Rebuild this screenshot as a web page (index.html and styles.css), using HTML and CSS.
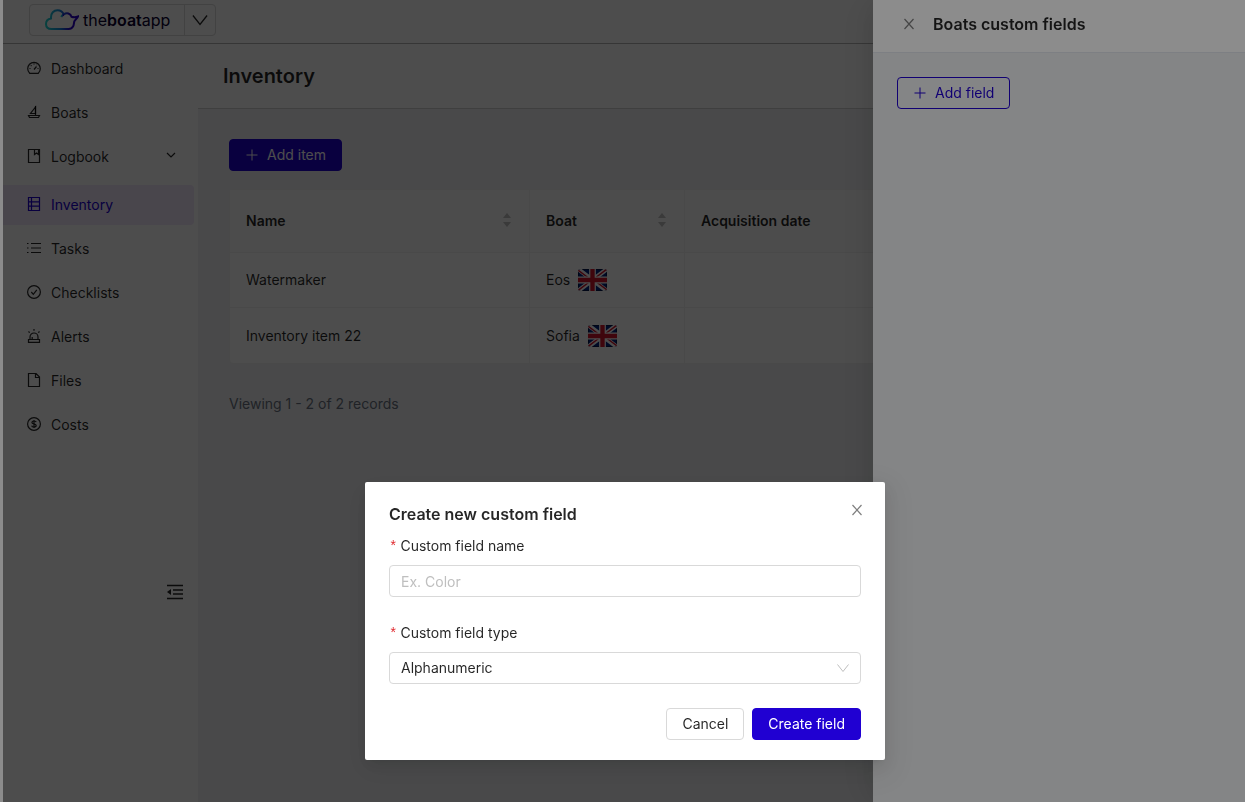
FILE: index.html
```html
<!DOCTYPE html>
<html lang="en">
<head>
<meta charset="utf-8">
<meta name="viewport" content="width=device-width, initial-scale=1">
<title>Inventory - theboatapp</title>
<link rel="stylesheet" href="styles.css">
</head>
<body>
<svg class="defs" aria-hidden="true">
  <symbol id="plus" viewBox="0 0 14 14"><path d="M7 1.500v11M1.500 7h11"/></symbol>
  <symbol id="close" viewBox="0 0 14 14"><path d="M2.500 2l9 10M11.500 2l-9 10"/></symbol>
  <symbol id="down" viewBox="0 0 14 14"><path d="M1.500 3.500L7 10.500l5.500-7"/></symbol>
  <symbol id="flag" viewBox="0 0 30 22" preserveAspectRatio="none">
    <path fill="#00247d" d="M0 0h30v22H0z"/>
    <path stroke="#fff" stroke-width="4.500" d="M0 0l30 22M30 0L0 22"/>
    <path stroke="#cf142b" stroke-width="1.500" d="M0 1l13 9.500M17 11.500L30 21M30 0L17 9.500M13 12L0 21.500"/>
    <path stroke="#fff" stroke-width="7" d="M15 0v22M0 11h30"/>
    <path stroke="#cf142b" stroke-width="4.500" d="M15 0v22M0 11h30"/>
  </symbol>
</svg>

<div class="app">
  <header class="topbar">
    <div class="switcher">
      <a class="brand" href="#" aria-label="theboatapp">
        <svg class="cloud" viewBox="0 0 34 22" aria-hidden="true">
          <defs><linearGradient id="sea"><stop offset="0" stop-color="#20d8d0"/><stop offset=".45" stop-color="#1684dc"/><stop offset=".75" stop-color="#2a00c8"/><stop offset="1" stop-color="#2a00c8"/></linearGradient></defs>
          <path stroke="url(#sea)" d="M6.500 20C2.500 20 1 17.500 1 15c0-3 2-5 5-5.500C5.500 4 9 1.200 12.500 1.200c3 0 5.200 1.600 6.200 4.300 2.800-2.300 7-1.300 7.800 2.300 2.300.8 4.500.5 6.500-.3-1 2-2.500 3-3.500 4.500-.8 1.500-.3 3.500-1.500 5.500-.8 1.500-2.200 2.500-4.500 2.500z"/>
          <path stroke="url(#sea)" d="M18.700 5.500c-1.300.6-2 1.300-2.500 2.500"/>
        </svg>
        <span class="wordmark">the<b>boat</b>app</span>
      </a>
      <button class="switch" type="button" aria-label="Switch account"><svg viewBox="0 0 14 14"><use href="#down"/></svg></button>
    </div>
  </header>

  <nav class="sidebar">
    <a class="item" href="#"><svg viewBox="0 0 14 14"><path d="M2.700 12.300a6.300 6.300 0 1 1 8.600 0zM7 8.500l2.500-3M7 2.500v1M2.500 7.500h1M10.500 7.500h1M3.800 4.300l.7.7M9.800 3.800l-.3.300"/></svg>Dashboard</a>
    <a class="item" href="#"><svg viewBox="0 0 14 14"><path d="M1.500 10.500h11l-1 2h-9zM8.500 2L3.500 8.500h5z"/><path d="M8.500 1v9"/></svg>Boats</a>
    <a class="item group" href="#"><svg viewBox="0 0 14 14"><path d="M1.500.5h11v13h-11zM7.500.5v5l2-1.500 2 1.500v-5"/></svg>Logbook<svg class="arrow" viewBox="0 0 10 10"><path d="M1 3l4 4 4-4"/></svg></a>
    <a class="item selected" href="#" aria-current="page"><svg viewBox="0 0 14 14"><path d="M1.500.5h11v13h-11zM1.500 4.800h11M1.500 9.200h11M4.500.5v13"/></svg>Inventory</a>
    <a class="item" href="#"><svg viewBox="0 0 14 14"><path d="M4 2.500h10M4 7h10M4 11.500h10M0 2.500h1.500M0 7h1.500M0 11.500h1.500"/></svg>Tasks</a>
    <a class="item" href="#"><svg viewBox="0 0 14 14"><circle cx="7" cy="7" r="6.400"/><path d="M4.300 7l2 2.300 3.500-4.500"/></svg>Checklists</a>
    <a class="item" href="#"><svg viewBox="0 0 14 14"><path d="M3 10.500V8a4 4 0 0 1 8 0v2.500M1.500 10.500h11v2.800h-11zM7 0v1.800M1.500 2.500l1.200 1.200M12.500 2.500l-1.200 1.200M5.200 8v2.500"/></svg>Alerts</a>
    <a class="item" href="#"><svg viewBox="0 0 14 14"><path d="M1.500.5H9L12.500 4v9.500h-11zM8.500.5v4h4"/></svg>Files</a>
    <a class="item" href="#"><svg viewBox="0 0 14 14"><circle cx="7" cy="7" r="6.400"/><path d="M9.200 5.200C9 4.200 8 4 7 4c-1.200 0-2.100.5-2.100 1.400C4.900 7.500 9.200 6.300 9.200 8.600 9.200 9.600 8.200 10 7 10c-1.200 0-2.200-.4-2.300-1.400M7 3v8"/></svg>Costs</a>
    <button class="collapse" type="button" aria-label="Collapse menu"><svg viewBox="0 0 18 16"><path d="M1 1.500h16M7 6h10M7 10h10M1 14.500h16"/><path class="solid" d="M5 5v6L1 8z"/></svg></button>
  </nav>

  <main class="content">
    <div class="page-head"><h1>Inventory</h1></div>
    <div class="page-body">
      <button class="btn primary" type="button"><svg viewBox="0 0 14 14"><use href="#plus"/></svg>Add item</button>
      <table class="records">
        <colgroup><col class="col-name"><col class="col-boat"><col class="col-date"></colgroup>
        <thead><tr>
          <th><span class="sort">Name<svg viewBox="0 0 10 16"><path d="M5 1l4 5H1zM5 15l4-5H1z"/></svg></span></th>
          <th><span class="sort">Boat<svg viewBox="0 0 10 16"><path d="M5 1l4 5H1zM5 15l4-5H1z"/></svg></span></th>
          <th>Acquisition date</th>
        </tr></thead>
        <tbody>
          <tr><td>Watermaker</td><td><span class="boat">Eos<svg class="flag" role="img" aria-label="United Kingdom"><use href="#flag"/></svg></span></td><td></td></tr>
          <tr><td>Inventory item 22</td><td><span class="boat">Sofia<svg class="flag" role="img" aria-label="United Kingdom"><use href="#flag"/></svg></span></td><td></td></tr>
        </tbody>
      </table>
      <p class="summary">Viewing 1 - 2 of 2 records</p>
    </div>
  </main>
</div>

<div class="layer drawer-layer">
  <aside class="drawer" aria-labelledby="drawer-title">
    <header class="drawer-head">
      <button class="icon-btn" type="button" aria-label="Close drawer"><svg viewBox="0 0 14 14"><use href="#close"/></svg></button>
      <h2 id="drawer-title">Boats custom fields</h2>
    </header>
    <div class="drawer-body">
      <button class="btn ghost" type="button"><svg viewBox="0 0 14 14"><use href="#plus"/></svg>Add field</button>
    </div>
  </aside>
</div>

<div class="layer modal-layer">
  <form class="modal" role="dialog" aria-modal="true" aria-labelledby="modal-title">
    <header class="modal-head">
      <h2 id="modal-title">Create new custom field</h2>
      <button class="icon-btn" type="button" aria-label="Close dialog"><svg viewBox="0 0 14 14"><use href="#close"/></svg></button>
    </header>
    <div class="field">
      <label for="field-name"><span class="star">*</span>Custom field name</label>
      <input id="field-name" type="text" placeholder="Ex. Color">
    </div>
    <div class="field">
      <label for="field-type"><span class="star">*</span>Custom field type</label>
      <div class="select">
        <select id="field-type"><option>Alphanumeric</option></select>
        <svg viewBox="0 0 14 14" aria-hidden="true"><use href="#down"/></svg>
      </div>
    </div>
    <footer class="actions">
      <button class="btn" type="button">Cancel</button>
      <button class="btn primary" type="submit">Create field</button>
    </footer>
  </form>
</div>
</body>
</html>
```
FILE: styles.css
```css
:root {
  --primary: #2000d2;
  --ink: rgba(0, 0, 0, 0.85);
  --line: #d9d9d9;
  --soft-line: #f0f0f0;
  --surface: #f0f2f5;
  --gutter: 3px;
}

* { box-sizing: border-box; }

body {
  margin: 0;
  overflow: hidden;
  background: #fff;
  color: var(--ink);
  font: 14px/22px Inter, "Liberation Sans", sans-serif;
}

h1, h2, p { margin: 0; }
a { color: inherit; text-decoration: none; }
button, input, select { font: inherit; color: inherit; margin: 0; }
button { cursor: pointer; }
svg { fill: none; stroke: currentColor; flex: none; }
.defs { position: absolute; width: 0; height: 0; }

.app {
  display: grid;
  grid-template: 44px 1fr / 195px minmax(0, 1fr);
  height: 100vh;
  padding-left: var(--gutter);
}

.topbar {
  grid-column: 1 / -1;
  padding: 4px 26px;
  border-bottom: 1px solid #b4b4b4;
}

.switcher {
  display: inline-flex;
  height: 32px;
  border: 1px solid var(--line);
  border-radius: 4px;
}

.brand { display: flex; align-items: center; gap: 4px; padding: 0 14px 0 15px; }
.cloud { width: 34px; height: 22px; stroke-width: 2; }
.wordmark { color: #0a0030; font-size: 16px; }
.wordmark b { font-weight: 600; }

.switch {
  display: grid;
  place-items: center;
  width: 31px;
  padding: 0;
  border: 0;
  border-left: 1px solid var(--line);
  background: none;
}
.switch svg { width: 18px; height: 18px; }

.sidebar {
  display: flex;
  flex-direction: column;
  gap: 4px;
  padding-top: 5px;
}

.item {
  display: flex;
  align-items: center;
  gap: 10px;
  height: 40px;
  margin-right: 4px;
  padding: 0 18px 0 24px;
}
.item svg { width: 14px; height: 14px; margin-bottom: 2px; stroke-width: 1.2; }
.item .arrow { width: 10px; height: 10px; margin-left: auto; margin-bottom: 4px; }
.group { margin-bottom: 4px; }
.selected {
  border-radius: 0 4px 4px 0;
  background: #f0e6fa;
  color: var(--primary);
}

.collapse {
  align-self: flex-end;
  display: flex;
  margin: 135px 14px 0 0;
  padding: 0;
  border: 0;
  background: none;
}
.collapse svg { width: 18px; height: 16px; stroke-width: 1.500; }
.solid { fill: currentColor; stroke: none; }

.content { overflow: hidden; background: var(--surface); }

.page-head {
  padding: 16px 25px;
  border-bottom: 1px solid #d0d0d0;
  background: #fff;
}
.page-head h1 { font-size: 20px; line-height: 32px; font-weight: 600; }
.page-body { padding: 30px 31px; }

.btn {
  display: inline-flex;
  align-items: center;
  justify-content: center;
  gap: 8px;
  height: 32px;
  padding: 0 15px;
  border: 1px solid var(--line);
  border-radius: 4px;
  background: #fff;
}
.btn svg { width: 14px; height: 14px; }
.primary { border-color: var(--primary); background: var(--primary); color: #fff; }
.ghost { border-color: var(--primary); background: transparent; color: var(--primary); }

.records {
  width: 1200px;
  margin-top: 18px;
  border: 1px solid var(--soft-line);
  border-spacing: 0;
  border-radius: 4px;
  background: #fff;
  table-layout: fixed;
}
.col-name { width: 300px; }
.col-boat { width: 155px; }
.records th, .records td {
  height: 55px;
  padding: 0 16px;
  border-right: 1px solid var(--soft-line);
  border-bottom: 1px solid var(--soft-line);
  text-align: left;
}
.records th { height: 63px; background: #fafafa; font-weight: 600; }
.records tr:last-child td { border-bottom: 0; }
.sort { display: flex; align-items: center; justify-content: space-between; }
.sort svg { width: 10px; height: 16px; margin: 0 1px 2px 0; fill: #bfbfbf; stroke: none; }
.boat { display: flex; align-items: center; gap: 8px; }
.flag { width: 29px; height: 22px; border-radius: 3px; }

.summary { margin-top: 29px; color: #6b7280; }

.layer { position: fixed; inset: 0; display: flex; background: rgba(0, 0, 0, 0.45); }

.drawer-layer { left: var(--gutter); justify-content: flex-end; }
.drawer {
  width: 372px;
  background: var(--surface);
  box-shadow: -6px 0 16px -8px rgba(0, 0, 0, 0.08), -9px 0 28px rgba(0, 0, 0, 0.05), -12px 0 48px 16px rgba(0, 0, 0, 0.03);
}
.drawer-head {
  display: flex;
  align-items: center;
  gap: 17px;
  padding: 12px 29px 16px;
  border-bottom: 1px solid #e4e8ee;
  background: #fff;
}
.drawer-head h2, .modal-head h2 { font-size: 16px; line-height: 24px; font-weight: 600; }
.drawer-body { padding: 24px; }

.icon-btn {
  display: flex;
  align-items: center;
  padding: 0;
  border: 0;
  background: none;
  color: rgba(0, 0, 0, 0.5);
}
.icon-btn svg { width: 14px; height: 14px; stroke-width: 1.2; }

.modal-layer {
  align-items: flex-end;
  justify-content: center;
  padding: 0 0 42px 5px;
}
.modal {
  width: 520px;
  padding: 20px 24px;
  border-radius: 2px;
  background: #fff;
  box-shadow: 0 3px 6px -4px rgba(0, 0, 0, 0.12), 0 6px 16px rgba(0, 0, 0, 0.08), 0 9px 28px 8px rgba(0, 0, 0, 0.05);
}
.modal-head { display: flex; justify-content: space-between; margin-bottom: 9px; }
.modal-head .icon-btn { height: 16px; margin-right: -3px; }

.field + .field { margin-top: 25px; }
.field label { display: block; margin-bottom: 7px; }
.star { margin-right: 3px; color: #e0282e; font-family: "Liberation Mono", monospace; }

.field input, .select select {
  display: block;
  width: 100%;
  height: 32px;
  padding: 0 11px;
  border: 1px solid var(--line);
  border-radius: 4px;
  background: #fff;
  appearance: none;
}
.field input::placeholder { color: #bfbfbf; opacity: 1; }
.select { position: relative; }
.select svg {
  position: absolute;
  top: 9px;
  right: 11px;
  width: 14px;
  height: 14px;
  color: #bfbfbf;
  pointer-events: none;
}

.actions { display: flex; justify-content: flex-end; gap: 8px; margin-top: 24px; }
```
